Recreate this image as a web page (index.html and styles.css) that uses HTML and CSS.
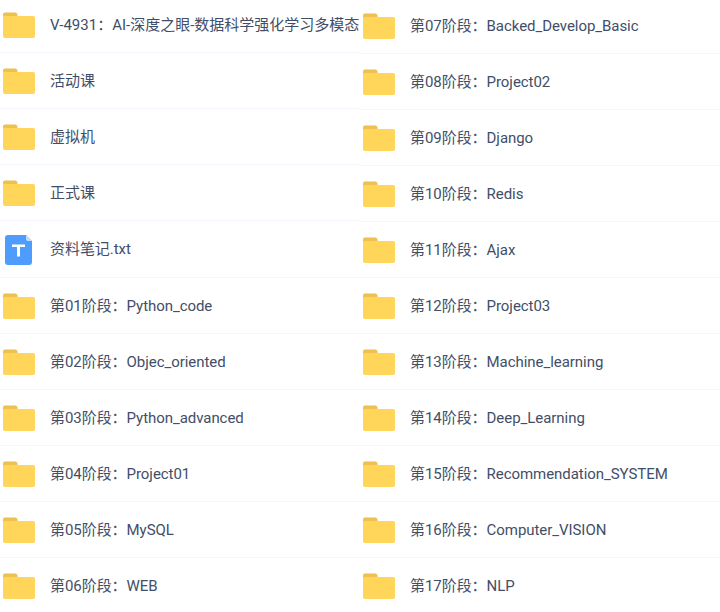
FILE: index.html
```html
<!DOCTYPE html>
<html lang="en">
<head>
    <meta charset="UTF-8">
    <meta name="viewport" content="width=device-width, initial-scale=1.0">
    <title>Files</title>
    <link rel="stylesheet" href="styles.css">
</head>
<body>
    <svg class="defs" width="0" height="0">
        <symbol id="folder" viewBox="0 0 32 26">
            <path d="M0 2.5a2 2 0 0 1 2-2h10a2.500 2.500 0 0 1 2.500 2.500v2H0z" fill="#edc04f"/>
            <path d="M0 6a2 2 0 0 1 2-2h28a2 2 0 0 1 2 2v18a2 2 0 0 1-2 2H2a2 2 0 0 1-2-2z" fill="#ffd659"/>
        </symbol>
        <symbol id="txt" viewBox="0 0 27 30">
            <path d="M3 0h18l6 6v21a3 3 0 0 1-3 3H3a3 3 0 0 1-3-3V3a3 3 0 0 1 3-3z" fill="#4f9cff"/>
            <path d="M21 0l6 6h-4a2 2 0 0 1-2-2z" fill="#c5deff"/>
            <path d="M7 9.500h13v2.500h-5v9.500h-3V12H7z" fill="#fff"/>
        </symbol>
    </svg>
    <div class="file-list">
        <ul class="col col-left">
            <li class="row"><svg class="icon"><use href="#folder"/></svg><span class="name name-long">V-4931：AI-深度之眼-数据科学强化学习多模态</span></li>
            <li class="row"><svg class="icon"><use href="#folder"/></svg><span class="name">活动课</span></li>
            <li class="row"><svg class="icon"><use href="#folder"/></svg><span class="name">虚拟机</span></li>
            <li class="row"><svg class="icon"><use href="#folder"/></svg><span class="name">正式课</span></li>
            <li class="row row-txt"><svg class="icon icon-txt"><use href="#txt"/></svg><span class="name">资料笔记.txt</span></li>
            <li class="row"><svg class="icon"><use href="#folder"/></svg><span class="name">第01阶段：Python_code</span></li>
            <li class="row"><svg class="icon"><use href="#folder"/></svg><span class="name">第02阶段：Objec_oriented</span></li>
            <li class="row"><svg class="icon"><use href="#folder"/></svg><span class="name">第03阶段：Python_advanced</span></li>
            <li class="row"><svg class="icon"><use href="#folder"/></svg><span class="name">第04阶段：Project01</span></li>
            <li class="row"><svg class="icon"><use href="#folder"/></svg><span class="name">第05阶段：MySQL</span></li>
            <li class="row"><svg class="icon"><use href="#folder"/></svg><span class="name">第06阶段：WEB</span></li>
        </ul>
        <ul class="col col-right">
            <li class="row"><svg class="icon"><use href="#folder"/></svg><span class="name">第07阶段：Backed_Develop_Basic</span></li>
            <li class="row"><svg class="icon"><use href="#folder"/></svg><span class="name">第08阶段：Project02</span></li>
            <li class="row"><svg class="icon"><use href="#folder"/></svg><span class="name">第09阶段：Django</span></li>
            <li class="row"><svg class="icon"><use href="#folder"/></svg><span class="name">第10阶段：Redis</span></li>
            <li class="row"><svg class="icon"><use href="#folder"/></svg><span class="name">第11阶段：Ajax</span></li>
            <li class="row"><svg class="icon"><use href="#folder"/></svg><span class="name">第12阶段：Project03</span></li>
            <li class="row"><svg class="icon"><use href="#folder"/></svg><span class="name">第13阶段：Machine_learning</span></li>
            <li class="row"><svg class="icon"><use href="#folder"/></svg><span class="name">第14阶段：Deep_Learning</span></li>
            <li class="row"><svg class="icon"><use href="#folder"/></svg><span class="name">第15阶段：Recommendation_SYSTEM</span></li>
            <li class="row"><svg class="icon"><use href="#folder"/></svg><span class="name">第16阶段：Computer_VISION</span></li>
            <li class="row"><svg class="icon"><use href="#folder"/></svg><span class="name">第17阶段：NLP</span></li>
        </ul>
    </div>
</body>
</html>
```

FILE: styles.css
```css
html, body {
    margin: 0;
    height: 612px;
    overflow: hidden;
    background-color: #fff;
}
.defs {
    position: absolute;
}
.file-list {
    display: flex;
    font-family: Roboto, "Noto Sans CJK SC", sans-serif;
    font-size: 15px;
    letter-spacing: -0.05px;
    color: #424e67;
}
.col {
    flex: 0 0 360px;
    width: 360px;
    margin: 0;
    padding: 0;
    list-style: none;
}
.col-left {
    margin-top: -3px;
}
.col-right {
    margin-top: -2px;
}
.row {
    display: flex;
    align-items: center;
    box-sizing: border-box;
    height: 56px;
    padding-left: 3px;
    border-bottom: 1px solid #f3f6fc;
}
.row-txt {
    height: 57px;
}
.col-left .row {
    overflow: hidden;
}
.icon {
    flex: none;
    width: 32px;
    height: 26px;
    margin-top: 1px;
    margin-right: 15px;
}
.icon-txt {
    width: 27px;
    height: 30px;
    margin-top: 2px;
    margin-left: 2px;
    margin-right: 18px;
}
.name {
    margin-bottom: 2px;
    white-space: nowrap;
}
.row-txt .name {
    margin-bottom: 4px;
}
.name-long {
    letter-spacing: 0;
}
```
